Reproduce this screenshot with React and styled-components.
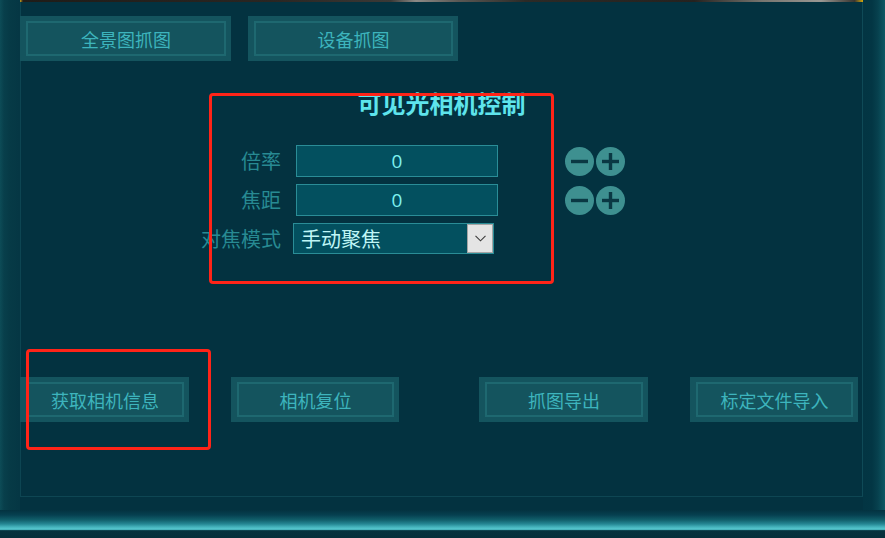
import React from "react";
import styled, { createGlobalStyle } from "styled-components";

const Global = createGlobalStyle`
  html, body { margin: 0; padding: 0; background: #052f3b; overflow: hidden; }
  * { box-sizing: border-box; }
`;

const FONT = `"Noto Sans CJK SC", "Noto Sans", sans-serif`;

const Screen = styled.div`
  position: relative;
  width: 885px;
  height: 538px;
  display: flex;
  flex-direction: column;
  background: #033240;
  font-family: ${FONT};
  overflow: hidden;
`;

const Body = styled.div`
  display: flex;
  height: 510px;
`;

const LeftEdge = styled.div`
  width: 20px;
  background: linear-gradient(90deg, #0d4c57 0px, #083f4b 4px, #063a46 10px, #053744 19px);
`;

const RightEdge = styled.div`
  width: 22px;
  background: linear-gradient(90deg, #033543 0px, #033644 9px, #07414e 15px, #0e5864 22px);
`;

const Middle = styled.div`
  flex: 1;
  display: flex;
  flex-direction: column;
`;

const Panel = styled.div`
  height: 497px;
  display: flex;
  flex-direction: column;
  border-left: 1px solid #0d4552;
  border-right: 1px solid #0f4a57;
  border-bottom: 1px solid #0e4653;
`;

const Strip = styled.div`
  height: 2px;
  margin: 0 -1px;
  background: linear-gradient(
    90deg,
    #c8a020 0px, #1f1c18 3px, #2a2622 30%, #3b3936 44%, #8c8a86 47%, #5a5854 52%,
    #2c2a26 60%, #25221f 80%, #77756f 88%, #9a9893 95%, #3a3630 99%, #d4a80c 100%
  );
`;

const ButtonRow = styled.div`
  display: flex;
  margin-left: -1px;
  margin-top: ${(p) => p.$top}px;
  gap: ${(p) => p.$gap}px;
`;

const Btn = styled.div`
  width: ${(p) => p.$w}px;
  height: 45px;
  margin-left: ${(p) => p.$ml || 0}px;
  padding: 5px 5px 5px 6px;
  background: #14545e;
  flex-shrink: 0;
`;

const BtnInner = styled.div`
  height: 100%;
  border: 2px solid #1e6870;
  display: flex;
  align-items: center;
  justify-content: center;
  color: #3db4bd;
  font-size: 18px;
  line-height: 1;
`;

const Title = styled.div`
  margin-top: 27px;
  height: 30px;
  line-height: 30px;
  text-align: center;
  color: #5ee4ec;
  font-size: 24px;
  font-weight: 700;
`;

const Form = styled.div`
  margin-top: 27px;
  margin-left: 169px;
  display: grid;
  grid-template-columns: 91px 202px auto;
  column-gap: 15px;
  row-gap: 7px;
  align-items: center;
  justify-items: start;
`;

const Label = styled.div`
  justify-self: end;
  color: #278a93;
  font-size: 20px;
  line-height: 32px;
  white-space: nowrap;
`;

const Field = styled.div`
  width: 202px;
  height: 32px;
  border: 1px solid #2a8d97;
  background: #03505f;
  color: #7ef0ef;
  font-family: "Open Sans", "Noto Sans", sans-serif;
  font-size: 19px;
  display: flex;
  align-items: center;
  justify-content: center;
`;

const Select = styled.div`
  width: 201px;
  height: 31px;
  margin-left: -3px;
  margin-top: -1px;
  border: 1px solid #2a8d97;
  background: #03505f;
  display: flex;
  align-items: stretch;
`;

const SelectText = styled.div`
  flex: 1;
  display: flex;
  align-items: center;
  padding-left: 7px;
  color: #bff6f6;
  font-size: 20px;
`;

const SelectArrow = styled.div`
  width: 26px;
  background: #e4e4e4;
  border: 1px solid #a4a4a4;
  display: flex;
  align-items: center;
  justify-content: center;
`;

const Steppers = styled.div`
  display: flex;
  margin-left: 52px;
`;

const StepIcon = styled.svg`
  width: 29px;
  height: 29px;
  margin-left: ${(p) => (p.$first ? 0 : 2)}px;
  display: block;
`;

const BottomGlow = styled.div`
  height: 28px;
  background: linear-gradient(
    180deg,
    #033240 0px, #064050 5px, #11606c 10px, #258794 14px,
    #45b3bc 17px, #56c6ce 19px, #3aa2ac 20px, #06323e 20.6px, #052f3b 28px
  );
`;

const Annotation = styled.div`
  position: absolute;
  left: ${(p) => p.$x}px;
  top: ${(p) => p.$y}px;
  width: ${(p) => p.$w}px;
  height: ${(p) => p.$h}px;
  border: 3px solid #ff2418;
  border-radius: 4px;
  pointer-events: none;
`;

const Minus = () => (
  <StepIcon $first viewBox="0 0 29 29">
    <circle cx="14.5" cy="14.5" r="14.5" fill="#3e9090" />
    <line x1="6" y1="14.5" x2="23" y2="14.5" stroke="#0a3843" strokeWidth="3.4" />
  </StepIcon>
);

const Plus = () => (
  <StepIcon viewBox="0 0 29 29">
    <circle cx="14.5" cy="14.5" r="14.5" fill="#3e9090" />
    <line x1="6" y1="14.5" x2="23" y2="14.5" stroke="#0a3843" strokeWidth="3.4" />
    <line x1="14.5" y1="6" x2="14.5" y2="23" stroke="#0a3843" strokeWidth="3.4" />
  </StepIcon>
);

const Chevron = () => (
  <svg width="11" height="7" viewBox="0 0 11 7">
    <polyline points="0.5,0.8 5.5,5.8 10.5,0.8" fill="none" stroke="#3c3c3c" strokeWidth="1.1" />
  </svg>
);

const Button = ({ w, ml, children }) => (
  <Btn $w={w} $ml={ml}>
    <BtnInner>{children}</BtnInner>
  </Btn>
);

export default function App() {
  return (
    <>
      <Global />
      <Screen>
        <Body>
          <LeftEdge />
          <Middle>
            <Panel>
              <Strip />
              <ButtonRow $top={14} $gap={17}>
                <Button w={211}>全景图抓图</Button>
                <Button w={210}>设备抓图</Button>
              </ButtonRow>
              <Title>可见光相机控制</Title>
              <Form>
                <Label>倍率</Label>
                <Field>0</Field>
                <Steppers>
                  <Minus />
                  <Plus />
                </Steppers>
                <Label>焦距</Label>
                <Field>0</Field>
                <Steppers>
                  <Minus />
                  <Plus />
                </Steppers>
                <Label>对焦模式</Label>
                <Select>
                  <SelectText>手动聚焦</SelectText>
                  <SelectArrow>
                    <Chevron />
                  </SelectArrow>
                </Select>
              </Form>
              <ButtonRow $top={122} $gap={42}>
                <Button w={169}>获取相机信息</Button>
                <Button w={168}>相机复位</Button>
                <Button w={169} ml={38}>抓图导出</Button>
                <Button w={168}>标定文件导入</Button>
              </ButtonRow>
            </Panel>
          </Middle>
          <RightEdge />
        </Body>
        <BottomGlow />
        <Annotation $x={209} $y={93} $w={345} $h={191} />
        <Annotation $x={26} $y={349} $w={185} $h={101} />
      </Screen>
    </>
  );
}
